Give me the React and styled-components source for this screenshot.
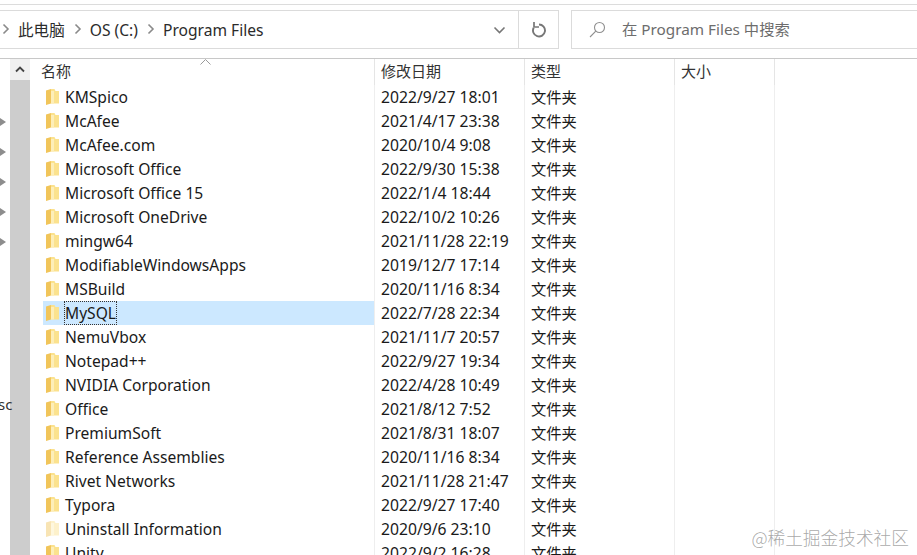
import React from 'react'
import styled, { createGlobalStyle } from 'styled-components'

const GlobalStyle = createGlobalStyle`
html, body {
    margin:0;
    padding:0;
    background:#fff;
}
`

const files = [
    ['KMSpico', '2022/9/27 18:01'],
    ['McAfee', '2021/4/17 23:38'],
    ['McAfee.com', '2020/10/4 9:08'],
    ['Microsoft Office', '2022/9/30 15:38'],
    ['Microsoft Office 15', '2022/1/4 18:44'],
    ['Microsoft OneDrive', '2022/10/2 10:26'],
    ['mingw64', '2021/11/28 22:19'],
    ['ModifiableWindowsApps', '2019/12/7 17:14'],
    ['MSBuild', '2020/11/16 8:34'],
    ['MySQL', '2022/7/28 22:34'],
    ['NemuVbox', '2021/11/7 20:57'],
    ['Notepad++', '2022/9/27 19:34'],
    ['NVIDIA Corporation', '2022/4/28 10:49'],
    ['Office', '2021/8/12 7:52'],
    ['PremiumSoft', '2021/8/31 18:07'],
    ['Reference Assemblies', '2020/11/16 8:34'],
    ['Rivet Networks', '2021/11/28 21:47'],
    ['Typora', '2022/9/27 17:40'],
    ['Uninstall Information', '2020/9/6 23:10'],
    ['Unity', '2022/9/2 16:28'],
]

const Chevron = () => (
    <svg width="8" height="12" viewBox="0 0 8 12">
        <path d="M1.500 1.500 6 6l-4.500 4.500" fill="none" stroke="#8a8a8a" strokeWidth="1.600" />
    </svg>
)

const Folder = ({ faded }) => (
    <FolderIcon $faded={faded} width="13" height="16" viewBox="0 0 13 16">
        <path d="M5 0h3.500l1 2H13v12.500H5z" fill="#fbe28e" />
        <path d="M5 2h3v12.500H5z" fill="#fdeeb8" />
        <path d="M0 1.500 5 0v14.500L0 16z" fill="#f1c55a" />
    </FolderIcon>
)

const App = () => {
    return (
        <Page>
            <GlobalStyle />
            <TopStrip />
            <AddressRow>
                <AddressBar>
                    <Crumbs>
                        <Chevron />
                        <Crumb>此电脑</Crumb>
                        <Chevron />
                        <Crumb>OS (C:)</Crumb>
                        <Chevron />
                        <Crumb>Program Files</Crumb>
                    </Crumbs>
                    <Dropdown>
                        <svg width="13" height="8" viewBox="0 0 13 8">
                            <path d="M1.500 1.500 6.500 6.500l5-5" fill="none" stroke="#777" strokeWidth="1.600" />
                        </svg>
                    </Dropdown>
                    <Refresh>
                        <svg width="16" height="17" viewBox="0 0 16 17">
                            <path d="M8 3.500a6 6 0 1 1-5.300 3.200" fill="none" stroke="#777" strokeWidth="1.900" />
                            <path d="M3 1v5h5" fill="none" stroke="#777" strokeWidth="1.700" />
                        </svg>
                    </Refresh>
                </AddressBar>
                <SearchBox>
                    <svg width="17" height="17" viewBox="0 0 17 17">
                        <circle cx="10.500" cy="6.500" r="5" fill="none" stroke="#8f8f8f" strokeWidth="1.100" />
                        <path d="M6.800 10.200 1 16" fill="none" stroke="#8f8f8f" strokeWidth="1.100" />
                    </svg>
                    <SearchText>在 Program Files 中搜索</SearchText>
                </SearchBox>
            </AddressRow>
            <Body>
                <NavEdge>
                    <Arrows>
                        {[0, 1, 2, 3, 4].map(i => <TreeArrow key={i} />)}
                    </Arrows>
                    <NavLabel>sc</NavLabel>
                </NavEdge>
                <Scrollbar>
                    <ScrollButton>
                        <svg width="10" height="7" viewBox="0 0 10 7">
                            <path d="M1 5.500 5 1.500l4 4" fill="none" stroke="#444" strokeWidth="1.800" />
                        </svg>
                    </ScrollButton>
                    <ScrollThumb />
                </Scrollbar>
                <List>
                    <HeaderRow>
                        <HeaderCell>
                            名称
                            <SortMark width="11" height="6" viewBox="0 0 11 6">
                                <path d="M.5 5.500l5-5 5 5" fill="none" stroke="#9a9a9a" strokeWidth="1" />
                            </SortMark>
                        </HeaderCell>
                        <HeaderCell>修改日期</HeaderCell>
                        <HeaderCell>类型</HeaderCell>
                        <HeaderCell>大小</HeaderCell>
                    </HeaderRow>
                    {files.map(([name, date]) => (
                        <Row key={name}>
                            <NameCell $selected={name === 'MySQL'}>
                                <Folder faded={name === 'Uninstall Information'} />
                                <Name $focus={name === 'MySQL'}>{name}</Name>
                            </NameCell>
                            <DateCell>{date}</DateCell>
                            <TypeCell>文件夹</TypeCell>
                            <Cell />
                        </Row>
                    ))}
                </List>
            </Body>
            <Watermark>@稀土掘金技术社区</Watermark>
        </Page>
    )
}

export default App

const Page = styled.div`
position:relative;
width:917px;
height:555px;
overflow:hidden;
display:flex;
flex-direction:column;
background:#fff;
color:#1a1a1a;
font-family:"Noto Sans","Noto Sans CJK SC",sans-serif;
font-size:15px;
`

const TopStrip = styled.div`
height:4px;
border-bottom:1px solid #dcdcdc;
margin-bottom:5px;
flex:none;
`

const AddressRow = styled.div`
height:39px;
flex:none;
display:flex;
gap:12px;
margin-bottom:9px;
`

const AddressBar = styled.div`
width:560px;
margin-left:-1px;
display:flex;
align-items:stretch;
border:1px solid #dbdbdb;
box-sizing:border-box;
`

const Crumbs = styled.div`
flex:1;
display:flex;
align-items:center;
gap:8px;
padding-left:2px;
color:#2b2b2b;
font-size:15.600px;
svg{
    margin-top:-1px;
}
`

const Crumb = styled.span`
margin-right:1px;
`

const Dropdown = styled.div`
width:37px;
display:flex;
align-items:center;
justify-content:center;
box-sizing:border-box;
`

const Refresh = styled.div`
width:39px;
border-left:1px solid #dbdbdb;
display:flex;
align-items:center;
justify-content:center;
`

const SearchBox = styled.div`
flex:1;
margin-right:-2px;
display:flex;
align-items:center;
border:1px solid #dbdbdb;
padding-left:17px;
`

const SearchText = styled.span`
margin-left:16px;
padding-bottom:3px;
color:#6d6d6d;
font-size:15.300px;
`

const Body = styled.div`
flex:1;
display:flex;
min-height:0;
border-top:1px solid #c8c8c8;
`

const NavEdge = styled.div`
position:relative;
width:10px;
flex:none;
`

const Arrows = styled.div`
display:flex;
flex-direction:column;
gap:22px;
padding-top:59px;
`

const TreeArrow = styled.div`
width:0;
height:0;
border-top:4px solid transparent;
border-bottom:4px solid transparent;
border-left:6px solid #8d8d8d;
`

const NavLabel = styled.div`
position:absolute;
left:-2px;
top:335px;
color:#333;
`

const Scrollbar = styled.div`
width:20px;
flex:none;
display:flex;
flex-direction:column;
`

const ScrollButton = styled.div`
height:21px;
background:#f0f0f0;
display:flex;
align-items:center;
justify-content:center;
`

const ScrollThumb = styled.div`
flex:1;
background:#cdcdcd;
`

const List = styled.div`
flex:1;
min-width:0;
`

const columns = '345px 150px 150px 100px 1fr'

const HeaderRow = styled.div`
display:grid;
grid-template-columns:${columns};
height:26px;
`

const HeaderCell = styled.div`
position:relative;
display:flex;
align-items:center;
height:100%;
padding:0 0 3px 6px;
box-sizing:border-box;
border-right:1px solid #e5e5e5;
color:#333;
font-size:15px;
&:first-child{
    padding-left:11px;
}
`

const SortMark = styled.svg`
position:absolute;
left:170px;
top:0;
`

const Row = styled.div`
display:grid;
grid-template-columns:${columns};
height:24px;
`

const Cell = styled.div`
display:flex;
align-items:center;
padding-left:6px;
border-right:1px solid #eeeeee;
white-space:nowrap;
`

const DateCell = styled(Cell)`
font-size:15.700px;
`

const TypeCell = styled(Cell)`
font-size:15.300px;
padding-bottom:2px;
box-sizing:border-box;
`

const NameCell = styled(Cell)`
position:relative;
font-size:15.600px;
padding-left:16px;
gap:6px;
&::before{
    content:'';
    position:absolute;
    left:13px;
    right:0;
    top:0;
    bottom:0;
    background:${props => props.$selected ? '#cce8ff' : 'transparent'};
}
`

const FolderIcon = styled.svg`
position:relative;
opacity:${props => props.$faded ? 0.45 : 1};
flex:none;
`

const Name = styled.span`
position:relative;
outline:${props => props.$focus ? '1px dotted #333' : 'none'};
`

const Watermark = styled.div`
position:absolute;
right:8px;
bottom:5px;
color:rgba(130,130,130,0.7);
font-size:17.700px;
font-family:"Noto Sans CJK SC",sans-serif;
font-weight:300;
`
